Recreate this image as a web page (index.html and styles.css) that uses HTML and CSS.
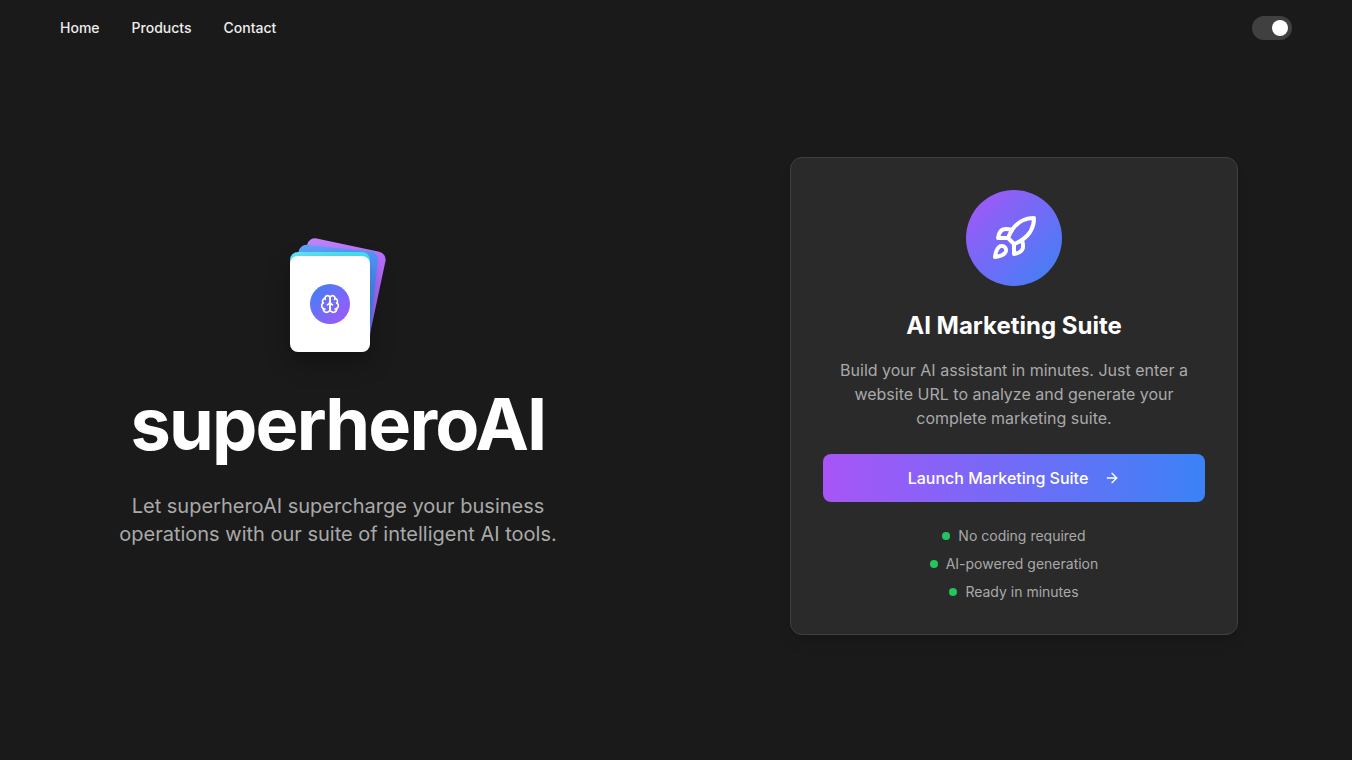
FILE: index.html
```html
<!DOCTYPE html>
<html lang="en">
<head>
<meta charset="utf-8">
<meta name="viewport" content="width=device-width, initial-scale=1">
<title>superheroAI</title>
<link rel="stylesheet" href="styles.css">
</head>
<body>
<header class="header">
  <nav class="nav" aria-label="Main">
    <a href="#">Home</a>
    <a href="#products">Products</a>
    <a href="#contact">Contact</a>
  </nav>
  <input class="switch" type="checkbox" role="switch" aria-label="Dark mode" checked>
</header>
<main class="main">
  <section class="hero">
    <div class="deck" aria-hidden="true">
      <div class="deck-card deck-card-purple"></div>
      <div class="deck-card deck-card-blue"></div>
      <div class="deck-card deck-card-cyan"></div>
      <div class="deck-card deck-card-front">
        <span class="brain-badge">
          <svg class="icon" width="20" height="20" viewBox="0 0 24 24">
            <path d="M12 5a3 3 0 1 0-5.997.125 4 4 0 0 0-2.526 5.77 4 4 0 0 0 .556 6.588A4 4 0 1 0 12 18Z"/>
            <path d="M12 5a3 3 0 1 1 5.997.125 4 4 0 0 1 2.526 5.77 4 4 0 0 1-.556 6.588A4 4 0 1 1 12 18Z"/>
            <path d="M15 13a4.5 4.5 0 0 1-3-4 4.5 4.5 0 0 1-3 4"/>
            <path d="M17.599 6.5a3 3 0 0 0 .399-1.375"/>
            <path d="M6.003 5.125A3 3 0 0 0 6.401 6.5"/>
            <path d="M3.477 10.896a4 4 0 0 1 .585-.396"/>
            <path d="M19.938 10.5a4 4 0 0 1 .585.396"/>
            <path d="M6 18a4 4 0 0 1-1.967-.516"/>
            <path d="M19.967 17.484A4 4 0 0 1 18 18"/>
          </svg>
        </span>
      </div>
    </div>
    <h1 class="title">superheroAI</h1>
    <p class="tagline">Let superheroAI supercharge your business operations with our suite of intelligent AI tools.</p>
  </section>
  <section class="offer">
    <article class="card">
      <span class="rocket-badge">
        <svg class="icon" width="48" height="48" viewBox="0 0 24 24" aria-hidden="true">
          <path d="M4.500 16.500c-1.500 1.260-2 5-2 5s3.740-.5 5-2c.71-.84.7-2.130-.09-2.910a2.180 2.180 0 0 0-2.910-.09z"/>
          <path d="m12 15-3-3a22 22 0 0 1 2-3.950A12.880 12.880 0 0 1 22 2c0 2.720-.78 7.500-6 11a22.350 22.350 0 0 1-4 2z"/>
          <path d="M9 12H4s.55-3.030 2-4c1.620-1.080 5 0 5 0"/>
          <path d="M12 15v5s3.030-.55 4-2c1.080-1.620 0-5 0-5"/>
        </svg>
      </span>
      <h2 class="card-title">AI Marketing Suite</h2>
      <p class="card-text">Build your AI assistant in minutes. Just enter a website URL to analyze and generate your complete marketing suite.</p>
      <button class="launch" type="button">
        Launch Marketing Suite
        <svg class="icon" width="16" height="16" viewBox="0 0 24 24" aria-hidden="true">
          <path d="M5 12h14"/>
          <path d="m12 5 7 7-7 7"/>
        </svg>
      </button>
      <ul class="features">
        <li>No coding required</li>
        <li>AI-powered generation</li>
        <li>Ready in minutes</li>
      </ul>
    </article>
  </section>
</main>
</body>
</html>
```
FILE: styles.css
```css
*, *::before, *::after { box-sizing: border-box; }

body {
  margin: 0;
  min-height: 100vh;
  display: flex;
  flex-direction: column;
  background: #1a1a1a;
  color: #fff;
  font-family: Inter, "Liberation Sans", sans-serif;
}

h1, h2, p, ul { margin: 0; padding: 0; }

.icon {
  display: block;
  flex: none;
  fill: none;
  stroke: currentColor;
  stroke-width: 2;
  stroke-linecap: round;
  stroke-linejoin: round;
}

.header {
  display: flex;
  align-items: center;
  justify-content: space-between;
  padding: 16px 60px;
}

.nav { display: flex; gap: 32px; }

.nav a {
  color: #ededed;
  font-size: 14px;
  line-height: 20px;
  font-weight: 500;
  text-decoration: none;
}

.switch {
  appearance: none;
  display: flex;
  align-items: center;
  justify-content: flex-end;
  width: 40px;
  height: 24px;
  margin: 0;
  padding: 4px;
  border-radius: 12px;
  background: #404040;
}

.switch::before {
  content: "";
  width: 16px;
  height: 16px;
  border-radius: 50%;
  background: #fff;
}

.switch:not(:checked) { justify-content: flex-start; }

.main {
  flex: 1;
  display: grid;
  grid-template-columns: 1fr 1fr;
  align-items: center;
  padding-bottom: 24px;
}

.hero {
  display: flex;
  flex-direction: column;
  align-items: center;
  text-align: center;
}

/* Room above and to the right for the fanned cards */
.deck {
  display: grid;
  margin-bottom: 36px;
  padding: 12px 16px 0 0;
}

.deck-card {
  grid-area: 1 / 1;
  width: 80px;
  height: 96px;
  border-radius: 8px;
}

.deck-card-purple {
  background: linear-gradient(135deg, #c084fc, #a855f7);
  transform: translate(8px, -12px) rotate(12deg);
}

.deck-card-blue {
  background: linear-gradient(135deg, #60a5fa, #3b82f6);
  transform: translate(4px, -8px) rotate(6deg);
}

.deck-card-cyan {
  background: linear-gradient(135deg, #67e8f9, #22d3ee);
  transform: translateY(-4px);
}

.deck-card-front {
  display: grid;
  place-items: center;
  background: #fff;
  box-shadow: 0 10px 25px rgb(0 0 0 / 30%);
  z-index: 1;
}

.brain-badge {
  display: grid;
  place-items: center;
  width: 40px;
  height: 40px;
  border-radius: 50%;
  background: linear-gradient(135deg, #3b82f6, #a855f7);
}

.title {
  margin-bottom: 32px;
  font-size: 72px;
  line-height: 72px;
  font-weight: 700;
  letter-spacing: -0.025em;
}

.tagline {
  max-width: 448px;
  color: #a9a9a9;
  font-size: 20px;
  line-height: 28px;
}

.offer {
  display: flex;
  justify-content: center;
}

.card {
  display: flex;
  flex-direction: column;
  align-items: center;
  width: 100%;
  max-width: 448px;
  padding: 32px;
  border: 1px solid #404040;
  border-radius: 12px;
  background: #2a2a2a;
  box-shadow: 0 10px 15px -3px rgb(0 0 0 / 10%), 0 4px 6px -4px rgb(0 0 0 / 10%);
  text-align: center;
}

.rocket-badge {
  display: grid;
  place-items: center;
  width: 96px;
  height: 96px;
  margin-bottom: 24px;
  border-radius: 50%;
  background: linear-gradient(135deg, #a855f7, #3b82f6);
}

.card-title {
  margin-bottom: 16px;
  font-size: 24px;
  line-height: 32px;
  font-weight: 700;
}

.card-text {
  margin-bottom: 24px;
  color: #a9a9a9;
  font-size: 16px;
  line-height: 24px;
}

.launch {
  display: flex;
  align-items: center;
  justify-content: center;
  gap: 16px;
  width: 100%;
  height: 48px;
  margin-bottom: 24px;
  padding: 0 32px;
  border: 0;
  border-radius: 8px;
  background: linear-gradient(90deg, #a855f7, #3b82f6);
  color: #fff;
  font: 500 16px/24px Inter, "Liberation Sans", sans-serif;
}

.features {
  display: flex;
  flex-direction: column;
  gap: 8px;
  color: #a9a9a9;
  font-size: 14px;
  line-height: 20px;
  list-style: none;
}

.features li {
  display: flex;
  align-items: center;
  justify-content: center;
  gap: 8px;
}

.features li::before {
  content: "";
  width: 8px;
  height: 8px;
  border-radius: 50%;
  background: #22c55e;
}
```
